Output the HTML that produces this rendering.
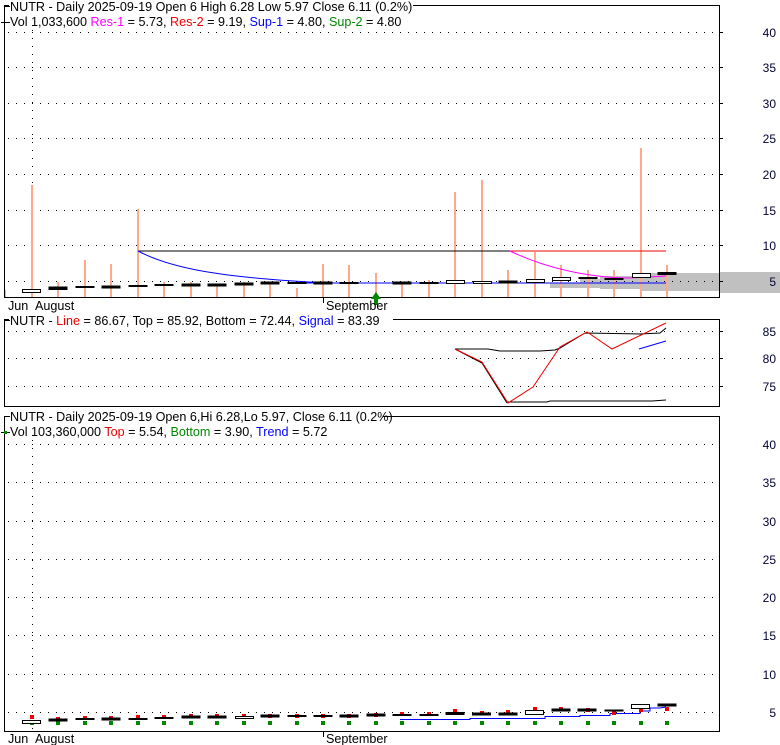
<!DOCTYPE html>
<html><head><meta charset="utf-8"><style>
body{margin:0;background:#fff;}
svg{display:block;font-family:"Liberation Sans",Arial,sans-serif;font-size:12px;}
.h{font-size:12.6px;}
</style></head><body>
<svg width="780" height="745" viewBox="0 0 780 745" xmlns="http://www.w3.org/2000/svg">
<rect width="780" height="745" fill="#fff"/>
<!-- gray band -->
<polygon points="550,283 580,283 580,279 600,279 600,276 640,276 640,273 719,273 719,272 780,272 780,293 719,293 719,291 640,291 640,289 600,289 600,288 550,288" fill="#c0c0c0"/>
<!-- grid -->
<g stroke="#000" stroke-dasharray="1,7" stroke-width="1">
<line x1="8" y1="32.5" x2="719" y2="32.5"/><line x1="8" y1="67.5" x2="719" y2="67.5"/><line x1="8" y1="103.5" x2="719" y2="103.5"/><line x1="8" y1="138.5" x2="719" y2="138.5"/><line x1="8" y1="174.5" x2="719" y2="174.5"/><line x1="8" y1="210.5" x2="719" y2="210.5"/><line x1="8" y1="245.5" x2="719" y2="245.5"/><line x1="8" y1="281.5" x2="719" y2="281.5"/>
<line x1="32.5" y1="30" x2="32.5" y2="296"/>
<line x1="8" y1="331.5" x2="719" y2="331.5"/><line x1="8" y1="358.5" x2="719" y2="358.5"/><line x1="8" y1="386.5" x2="719" y2="386.5"/>
<line x1="8" y1="444.5" x2="719" y2="444.5"/><line x1="8" y1="482.5" x2="719" y2="482.5"/><line x1="8" y1="521.5" x2="719" y2="521.5"/><line x1="8" y1="559.5" x2="719" y2="559.5"/><line x1="8" y1="597.5" x2="719" y2="597.5"/><line x1="8" y1="635.5" x2="719" y2="635.5"/><line x1="8" y1="674.5" x2="719" y2="674.5"/><line x1="8" y1="712.5" x2="719" y2="712.5"/>
<line x1="32.5" y1="440" x2="32.5" y2="730"/>
</g>
<!-- volume bars -->
<g fill="#ffa98a">
<rect x="4" y="290" width="2" height="7"/><rect x="31" y="185" width="2" height="112"/><rect x="57" y="282" width="2" height="15"/><rect x="84" y="260" width="2" height="37"/><rect x="110" y="264" width="2" height="33"/><rect x="137" y="209" width="2" height="88"/><rect x="163" y="282" width="2" height="15"/><rect x="190" y="282" width="2" height="15"/><rect x="216" y="284" width="2" height="13"/><rect x="243" y="282" width="2" height="15"/><rect x="269" y="284" width="2" height="13"/><rect x="296" y="288" width="2" height="9"/><rect x="322" y="264" width="2" height="33"/><rect x="348" y="265" width="2" height="32"/><rect x="375" y="273" width="2" height="24"/><rect x="401" y="283" width="2" height="14"/><rect x="428" y="280" width="2" height="17"/><rect x="454" y="192" width="2" height="105"/><rect x="481" y="180" width="2" height="117"/><rect x="507" y="270" width="2" height="27"/><rect x="534" y="252" width="2" height="45"/><rect x="560" y="265" width="2" height="32"/><rect x="587" y="270" width="2" height="27"/><rect x="613" y="270" width="2" height="27"/><rect x="640" y="148" width="2" height="149"/><rect x="666" y="265" width="2" height="32"/>
</g>
<!-- lines top -->
<polyline points="138,251 510,251" stroke="#000" fill="none"/>
<polyline points="510,251 666,251" stroke="#e00" fill="none"/>
<path d="M138,251 C170,268 220,278 330,283" stroke="#00f" fill="none"/>
<line x1="300" y1="283" x2="666" y2="283" stroke="#00f"/>
<path d="M510,251 C545,268 590,278 630,278 L666,276" stroke="#f0f" fill="none"/>
<!-- candles top -->
<g stroke="#000" fill="#000">
<rect x="22.5" y="289.5" width="18" height="3" fill="#fff"/>
<rect x="49" y="287" width="18" height="2.5"/><rect x="76" y="286.5" width="18" height="1"/><rect x="102" y="286" width="18" height="2"/><rect x="129" y="285.5" width="18" height="1"/><rect x="155" y="284.5" width="18" height="1"/><rect x="182" y="284" width="18" height="2"/><rect x="208" y="284" width="18" height="2"/><rect x="235" y="283" width="18" height="2"/><rect x="261" y="282" width="18" height="2"/><rect x="288" y="282.5" width="18" height="1"/><rect x="314" y="282" width="18" height="2"/><rect x="340" y="282.5" width="18" height="1"/><rect x="393" y="282" width="18" height="2"/><rect x="420" y="282.5" width="18" height="1"/>
<rect x="446.5" y="280.5" width="18" height="3" fill="#fff"/><rect x="473.5" y="281.5" width="18" height="2" fill="#fff"/><rect x="499" y="281" width="18" height="2"/><rect x="526.5" y="279.5" width="18" height="3" fill="#fff"/><rect x="552.5" y="277.5" width="18" height="3" fill="#fff"/><rect x="579" y="277.5" width="18" height="1"/><rect x="605" y="278.5" width="18" height="1"/><rect x="632.5" y="273.5" width="18" height="4" fill="#fff"/><rect x="658" y="272.5" width="18" height="2"/>
</g>
<!-- panel borders -->
<rect x="4.5" y="5.5" width="715" height="292" fill="none" stroke="#000"/>
<rect x="4.5" y="319.5" width="715" height="87" fill="none" stroke="#000"/>
<rect x="4.5" y="416.5" width="715" height="315" fill="none" stroke="#000"/>
<line x1="323.5" y1="297" x2="323.5" y2="303" stroke="#000"/>
<line x1="323.5" y1="731" x2="323.5" y2="737" stroke="#000"/>
<g stroke="#000">
<line x1="719" y1="32.5" x2="723" y2="32.5"/><line x1="719" y1="67.5" x2="723" y2="67.5"/><line x1="719" y1="103.5" x2="723" y2="103.5"/><line x1="719" y1="138.5" x2="723" y2="138.5"/><line x1="719" y1="174.5" x2="723" y2="174.5"/><line x1="719" y1="210.5" x2="723" y2="210.5"/><line x1="719" y1="245.5" x2="723" y2="245.5"/><line x1="719" y1="281.5" x2="723" y2="281.5"/>
<line x1="719" y1="331.5" x2="723" y2="331.5"/><line x1="719" y1="358.5" x2="723" y2="358.5"/><line x1="719" y1="386.5" x2="723" y2="386.5"/>
</g>
<g fill="#000033" text-anchor="end">
<text x="776" y="37">40</text><text x="776" y="72">35</text><text x="776" y="108">30</text><text x="776" y="143">25</text><text x="776" y="179">20</text><text x="776" y="215">15</text><text x="776" y="250">10</text><text x="776" y="286">5</text>
<text x="776" y="336">85</text><text x="776" y="363">80</text><text x="776" y="391">75</text>
<text x="776" y="449">40</text><text x="776" y="487">35</text><text x="776" y="526">30</text><text x="776" y="564">25</text><text x="776" y="602">20</text><text x="776" y="640">15</text><text x="776" y="679">10</text><text x="776" y="717">5</text>
</g>
<polygon points="376,292 381,299 378,299 378,305 374,305 374,299 371,299" fill="#080"/>
<!-- middle panel lines -->
<polyline points="455,349 488,349 500,351 540,351 555,350 560,348 585,333 640,334 660,333 666,328" stroke="#000" fill="none"/>
<polyline points="455,349 482,363 507,403" stroke="#000" fill="none"/>
<polyline points="507,402 547,402 550,401 652,401 666,400" stroke="#000" fill="none"/>
<polyline points="455,349 482,362 508,403 533,387 560,347 587,332 612,349 666,323" stroke="#e00" fill="none"/>
<polyline points="639,349 666,341" stroke="#00f" fill="none"/>
<!-- bottom panel -->
<polyline points="400,719.5 470,719.5 470,718.5 545,718.5 545,716.5 580,716.5 580,715.5 610,715.5 610,713.5 640,713.5 640,711 650,711 650,708 660,708 666,707" stroke="#00f" fill="none"/>
<g fill="#008800">
<rect x="30" y="721" width="4" height="4"/><rect x="56" y="721" width="4" height="4"/><rect x="83" y="721" width="4" height="4"/><rect x="109" y="721" width="4" height="4"/><rect x="136" y="721" width="4" height="4"/><rect x="162" y="721" width="4" height="4"/><rect x="189" y="721" width="4" height="4"/><rect x="215" y="721" width="4" height="4"/><rect x="242" y="721" width="4" height="4"/><rect x="268" y="721" width="4" height="4"/><rect x="295" y="721" width="4" height="4"/><rect x="321" y="721" width="4" height="4"/><rect x="347" y="721" width="4" height="4"/><rect x="374" y="721" width="4" height="4"/><rect x="400" y="721" width="4" height="4"/><rect x="427" y="721" width="4" height="4"/><rect x="453" y="721" width="4" height="4"/><rect x="480" y="721" width="4" height="4"/><rect x="506" y="721" width="4" height="4"/><rect x="533" y="721" width="4" height="4"/><rect x="559" y="721" width="4" height="4"/><rect x="586" y="721" width="4" height="4"/><rect x="612" y="721" width="4" height="4"/><rect x="639" y="721" width="4" height="4"/><rect x="665" y="721" width="4" height="4"/>
</g>
<g fill="#e00">
<rect x="30" y="715" width="4" height="4"/><rect x="56" y="717" width="4" height="4"/><rect x="83" y="716" width="4" height="4"/><rect x="109" y="716" width="4" height="4"/><rect x="136" y="715" width="4" height="4"/><rect x="162" y="715" width="4" height="4"/><rect x="189" y="714" width="4" height="4"/><rect x="215" y="714" width="4" height="4"/><rect x="242" y="714" width="4" height="4"/><rect x="268" y="714" width="4" height="4"/><rect x="295" y="714" width="4" height="4"/><rect x="321" y="714" width="4" height="4"/><rect x="347" y="714" width="4" height="4"/><rect x="374" y="713" width="4" height="4"/><rect x="400" y="712" width="4" height="4"/><rect x="427" y="712" width="4" height="4"/><rect x="453" y="709" width="4" height="4"/><rect x="480" y="711" width="4" height="4"/><rect x="506" y="710" width="4" height="4"/><rect x="533" y="707" width="4" height="4"/><rect x="559" y="707" width="4" height="4"/><rect x="586" y="708" width="4" height="4"/><rect x="612" y="711" width="4" height="4"/><rect x="639" y="708" width="4" height="4"/><rect x="665" y="707" width="4" height="4"/>
</g>
<g stroke="#000" fill="#000">
<rect x="22.5" y="720.5" width="18" height="3" fill="#fff"/>
<rect x="49" y="719" width="18" height="2"/><rect x="76" y="718.5" width="18" height="1"/><rect x="102" y="718" width="18" height="2"/><rect x="129" y="718.5" width="18" height="1"/><rect x="155" y="717.5" width="18" height="1"/><rect x="182" y="716" width="18" height="2"/><rect x="208" y="716" width="18" height="2"/><rect x="235.5" y="716.5" width="18" height="2" fill="#fff"/><rect x="261" y="715" width="18" height="2"/><rect x="288" y="715.5" width="18" height="1"/><rect x="314" y="715.5" width="18" height="1"/><rect x="340" y="715" width="18" height="2"/><rect x="367" y="714" width="18" height="2"/><rect x="393" y="714.5" width="18" height="1"/><rect x="420" y="714.5" width="18" height="1"/><rect x="446" y="712.5" width="18" height="2"/><rect x="472.5" y="713" width="18" height="2"/><rect x="499" y="713" width="18" height="2"/><rect x="525.5" y="710.5" width="18" height="4" fill="#fff"/><rect x="552" y="709" width="18" height="2"/><rect x="578" y="709" width="18" height="2"/><rect x="605" y="710" width="18" height="1"/><rect x="631.5" y="704.5" width="18" height="4" fill="#fff"/><rect x="658" y="704" width="18" height="2"/>
</g>
<!-- header text backgrounds -->
<g fill="#fff">
<rect x="9" y="0" width="404" height="13"/><rect x="9" y="14" width="382" height="14"/>
<rect x="9" y="314" width="384" height="13"/>
<rect x="9" y="410" width="374" height="13"/><rect x="9" y="425" width="308" height="14"/>
</g>
<g stroke="#000"><line x1="4" y1="6.5" x2="10" y2="6.5"/><line x1="1" y1="22.5" x2="10" y2="22.5"/>
<line x1="4" y1="320.5" x2="10" y2="320.5"/>
<line x1="4" y1="416.5" x2="10" y2="416.5"/><line x1="1" y1="432.5" x2="10" y2="432.5"/>
</g>
<text class="h" x="10" y="11">NUTR - Daily 2025-09-19 Open 6  High 6.28  Low 5.97  Close 6.11 (0.2%)</text>
<text class="h" x="10" y="26">Vol 1,033,600 <tspan fill="#f0f">Res-1</tspan> = 5.73, <tspan fill="#e00">Res-2</tspan> = 9.19, <tspan fill="#00f">Sup-1</tspan> = 4.80, <tspan fill="#080">Sup-2</tspan> = 4.80</text>
<text class="h" x="10" y="325">NUTR - <tspan fill="#e00">Line</tspan> = 86.67, Top = 85.92, Bottom = 72.44, <tspan fill="#00f">Signal</tspan> = 83.39</text>
<text class="h" x="10" y="421">NUTR - Daily 2025-09-19 Open 6,Hi 6.28,Lo 5.97, Close 6.11 (0.2%)</text>
<text class="h" x="10" y="436">Vol 103,360,000 <tspan fill="#e00">Top</tspan> = 5.54, <tspan fill="#080">Bottom</tspan> = 3.90, <tspan fill="#00f">Trend</tspan> = 5.72</text>
<rect x="4" y="431" width="3" height="3" fill="#080"/>
<text class="h" x="8" y="310">Jun</text><text class="h" x="35" y="310">August</text><text class="h" x="326" y="310">September</text>
<text class="h" x="8" y="743">Jun</text><text class="h" x="35" y="743">August</text><text class="h" x="326" y="743">September</text>
</svg>
</body></html>
